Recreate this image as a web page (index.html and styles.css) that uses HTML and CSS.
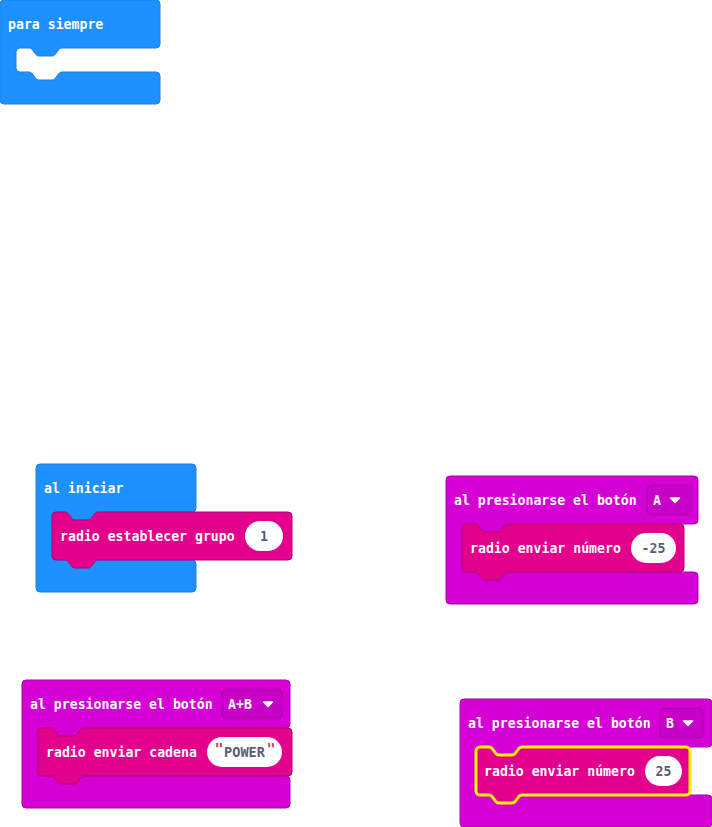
FILE: index.html
```html
<!DOCTYPE html>
<html lang="es">
<head>
    <meta charset="UTF-8">
    <meta name="viewport" content="width=device-width, initial-scale=1.0">
    <title>Bloques - radio</title>
    <link rel="stylesheet" href="styles.css">
</head>
<body>
    <div class="workspace">
        <svg class="canvas" width="712" height="827" viewBox="0 0 712 827">

            <!-- para siempre -->
            <g transform="translate(0,0)">
                <path class="blk loops" d="M0,4 a4,4 0 0 1 4,-4 h152 a4,4 0 0 1 4,4 v40 a4,4 0 0 1 -4,4 h-94 c -1.5,0 -2.5,0.8 -3.2,1.6 l -3.6,4.8 c -0.7,0.8 -1.7,1.6 -3.2,1.6 h -13 c -1.5,0 -2.5,-0.8 -3.2,-1.6 l -3.6,-4.8 c -0.7,-0.8 -1.7,-1.6 -3.2,-1.6 h-9 a4,4 0 0 0 -4,4 v16 a4,4 0 0 0 4,4 h9 c 1.5,0 2.5,0.8 3.2,1.6 l 3.6,4.8 c 0.7,0.8 1.7,1.6 3.2,1.6 h 13 c 1.5,0 2.5,-0.8 3.2,-1.6 l 3.6,-4.8 c 0.7,-0.8 1.7,-1.6 3.2,-1.6 h94 a4,4 0 0 1 4,4 v24 a4,4 0 0 1 -4,4 h-152 a4,4 0 0 1 -4,-4 z"/>
                <text class="lbl" x="8" y="24">para siempre</text>
            </g>

            <!-- al iniciar -->
            <g transform="translate(36,464)">
                <path class="blk loops" d="M0,4 a4,4 0 0 1 4,-4 h152 a4,4 0 0 1 4,4 v40 a4,4 0 0 1 -4,4 h-94 c -1.5,0 -2.5,0.8 -3.2,1.6 l -3.6,4.8 c -0.7,0.8 -1.7,1.6 -3.2,1.6 h -13 c -1.5,0 -2.5,-0.8 -3.2,-1.6 l -3.6,-4.8 c -0.7,-0.8 -1.7,-1.6 -3.2,-1.6 h-9 a4,4 0 0 0 -4,4 v40 a4,4 0 0 0 4,4 h9 c 1.5,0 2.5,0.8 3.2,1.6 l 3.6,4.8 c 0.7,0.8 1.7,1.6 3.2,1.6 h 13 c 1.5,0 2.5,-0.8 3.2,-1.6 l 3.6,-4.8 c 0.7,-0.8 1.7,-1.6 3.2,-1.6 h94 a4,4 0 0 1 4,4 v24 a4,4 0 0 1 -4,4 h-152 a4,4 0 0 1 -4,-4 z"/>
                <text class="lbl" x="8" y="24">al iniciar</text>
                <g transform="translate(16,48)">
                    <path class="blk radio" d="M0,4 a4,4 0 0 1 4,-4 h9 c 1.5,0 2.5,0.8 3.2,1.6 l 3.6,4.8 c 0.7,0.8 1.7,1.6 3.2,1.6 h 13 c 1.5,0 2.5,-0.8 3.2,-1.6 l 3.6,-4.8 c 0.7,-0.8 1.7,-1.6 3.2,-1.6 h190 a4,4 0 0 1 4,4 v40 a4,4 0 0 1 -4,4 h-190 c -1.5,0 -2.5,0.8 -3.2,1.6 l -3.6,4.8 c -0.7,0.8 -1.7,1.6 -3.2,1.6 h -13 c -1.5,0 -2.5,-0.8 -3.2,-1.6 l -3.6,-4.8 c -0.7,-0.8 -1.7,-1.6 -3.2,-1.6 h-9 a4,4 0 0 1 -4,-4 z"/>
                    <text class="lbl" x="8" y="24">radio establecer grupo</text>
                    <rect class="oval" x="193" y="9" width="38" height="30" rx="15"/>
                    <text class="val" x="212" y="24">1</text>
                </g>
            </g>

            <!-- al presionarse el botón A -->
            <g transform="translate(446,476)">
                <path class="blk input" d="M0,4 a4,4 0 0 1 4,-4 h244 a4,4 0 0 1 4,4 v40 a4,4 0 0 1 -4,4 h-186 c -1.5,0 -2.5,0.8 -3.2,1.6 l -3.6,4.8 c -0.7,0.8 -1.7,1.6 -3.2,1.6 h -13 c -1.5,0 -2.5,-0.8 -3.2,-1.6 l -3.6,-4.8 c -0.7,-0.8 -1.7,-1.6 -3.2,-1.6 h-9 a4,4 0 0 0 -4,4 v40 a4,4 0 0 0 4,4 h9 c 1.5,0 2.5,0.8 3.2,1.6 l 3.6,4.8 c 0.7,0.8 1.7,1.6 3.2,1.6 h 13 c 1.5,0 2.5,-0.8 3.2,-1.6 l 3.6,-4.8 c 0.7,-0.8 1.7,-1.6 3.2,-1.6 h186 a4,4 0 0 1 4,4 v24 a4,4 0 0 1 -4,4 h-244 a4,4 0 0 1 -4,-4 z"/>
                <text class="lbl" x="8" y="24">al presionarse el botón</text>
                <rect class="dd" x="201" y="9.5" width="43" height="29" rx="4"/>
                <text class="lbl" x="207" y="24">A</text>
                <path class="caret" d="M224.5,22 h9 l-4.5,4.5 z"/>
                <g transform="translate(16,48)">
                    <path class="blk radio" d="M0,4 a4,4 0 0 1 4,-4 h9 c 1.5,0 2.5,0.8 3.2,1.6 l 3.6,4.8 c 0.7,0.8 1.7,1.6 3.2,1.6 h 13 c 1.5,0 2.5,-0.8 3.2,-1.6 l 3.6,-4.8 c 0.7,-0.8 1.7,-1.6 3.2,-1.6 h172 a4,4 0 0 1 4,4 v40 a4,4 0 0 1 -4,4 h-172 c -1.5,0 -2.5,0.8 -3.2,1.6 l -3.6,4.8 c -0.7,0.8 -1.7,1.6 -3.2,1.6 h -13 c -1.5,0 -2.5,-0.8 -3.2,-1.6 l -3.6,-4.8 c -0.7,-0.8 -1.7,-1.6 -3.2,-1.6 h-9 a4,4 0 0 1 -4,-4 z"/>
                    <text class="lbl" x="8" y="24">radio enviar número</text>
                    <rect class="oval" x="169" y="9" width="45" height="30" rx="15"/>
                    <text class="val" x="191.5" y="24">-25</text>
                </g>
            </g>

            <!-- al presionarse el botón A+B -->
            <g transform="translate(22,680)">
                <path class="blk input" d="M0,4 a4,4 0 0 1 4,-4 h260 a4,4 0 0 1 4,4 v40 a4,4 0 0 1 -4,4 h-202 c -1.5,0 -2.5,0.8 -3.2,1.6 l -3.6,4.8 c -0.7,0.8 -1.7,1.6 -3.2,1.6 h -13 c -1.5,0 -2.5,-0.8 -3.2,-1.6 l -3.6,-4.8 c -0.7,-0.8 -1.7,-1.6 -3.2,-1.6 h-9 a4,4 0 0 0 -4,4 v40 a4,4 0 0 0 4,4 h9 c 1.5,0 2.5,0.8 3.2,1.6 l 3.6,4.8 c 0.7,0.8 1.7,1.6 3.2,1.6 h 13 c 1.5,0 2.5,-0.8 3.2,-1.6 l 3.6,-4.8 c 0.7,-0.8 1.7,-1.6 3.2,-1.6 h202 a4,4 0 0 1 4,4 v24 a4,4 0 0 1 -4,4 h-260 a4,4 0 0 1 -4,-4 z"/>
                <text class="lbl" x="8" y="24">al presionarse el botón</text>
                <rect class="dd" x="200" y="9.5" width="60" height="29" rx="4"/>
                <text class="lbl" x="206" y="24">A+B</text>
                <path class="caret" d="M241.5,22 h9 l-4.5,4.5 z"/>
                <g transform="translate(16,48)">
                    <path class="blk radio" d="M0,4 a4,4 0 0 1 4,-4 h9 c 1.5,0 2.5,0.8 3.2,1.6 l 3.6,4.8 c 0.7,0.8 1.7,1.6 3.2,1.6 h 13 c 1.5,0 2.5,-0.8 3.2,-1.6 l 3.6,-4.8 c 0.7,-0.8 1.7,-1.6 3.2,-1.6 h204 a4,4 0 0 1 4,4 v40 a4,4 0 0 1 -4,4 h-204 c -1.5,0 -2.5,0.8 -3.2,1.6 l -3.6,4.8 c -0.7,0.8 -1.7,1.6 -3.2,1.6 h -13 c -1.5,0 -2.5,-0.8 -3.2,-1.6 l -3.6,-4.8 c -0.7,-0.8 -1.7,-1.6 -3.2,-1.6 h-9 a4,4 0 0 1 -4,-4 z"/>
                    <text class="lbl" x="8" y="24">radio enviar cadena</text>
                    <rect class="oval" x="169" y="9" width="75" height="30" rx="15"/>
                    <text class="quote" x="181" y="26.5">"</text>
                    <text class="val big" x="206.5" y="24">POWER</text>
                    <text class="quote" x="233" y="26.5">"</text>
                </g>
            </g>

            <!-- al presionarse el botón B (seleccionado) -->
            <g transform="translate(460,699)">
                <path class="blk input" d="M0,4 a4,4 0 0 1 4,-4 h244 a4,4 0 0 1 4,4 v40 a4,4 0 0 1 -4,4 h-186 c -1.5,0 -2.5,0.8 -3.2,1.6 l -3.6,4.8 c -0.7,0.8 -1.7,1.6 -3.2,1.6 h -13 c -1.5,0 -2.5,-0.8 -3.2,-1.6 l -3.6,-4.8 c -0.7,-0.8 -1.7,-1.6 -3.2,-1.6 h-9 a4,4 0 0 0 -4,4 v40 a4,4 0 0 0 4,4 h9 c 1.5,0 2.5,0.8 3.2,1.6 l 3.6,4.8 c 0.7,0.8 1.7,1.6 3.2,1.6 h 13 c 1.5,0 2.5,-0.8 3.2,-1.6 l 3.6,-4.8 c 0.7,-0.8 1.7,-1.6 3.2,-1.6 h186 a4,4 0 0 1 4,4 v24 a4,4 0 0 1 -4,4 h-244 a4,4 0 0 1 -4,-4 z"/>
                <text class="lbl" x="8" y="24">al presionarse el botón</text>
                <rect class="dd" x="200" y="9.5" width="43" height="29" rx="4"/>
                <text class="lbl" x="206" y="24">B</text>
                <path class="caret" d="M223.5,22 h9 l-4.5,4.5 z"/>
                <g transform="translate(16,48)">
                    <path class="blk radio" d="M0,4 a4,4 0 0 1 4,-4 h9 c 1.5,0 2.5,0.8 3.2,1.6 l 3.6,4.8 c 0.7,0.8 1.7,1.6 3.2,1.6 h 13 c 1.5,0 2.5,-0.8 3.2,-1.6 l 3.6,-4.8 c 0.7,-0.8 1.7,-1.6 3.2,-1.6 h164 a4,4 0 0 1 4,4 v40 a4,4 0 0 1 -4,4 h-164 c -1.5,0 -2.5,0.8 -3.2,1.6 l -3.6,4.8 c -0.7,0.8 -1.7,1.6 -3.2,1.6 h -13 c -1.5,0 -2.5,-0.8 -3.2,-1.6 l -3.6,-4.8 c -0.7,-0.8 -1.7,-1.6 -3.2,-1.6 h-9 a4,4 0 0 1 -4,-4 z"/>
                    <path class="glow" d="M0,4 a4,4 0 0 1 4,-4 h9 c 1.5,0 2.5,0.8 3.2,1.6 l 3.6,4.8 c 0.7,0.8 1.7,1.6 3.2,1.6 h 13 c 1.5,0 2.5,-0.8 3.2,-1.6 l 3.6,-4.8 c 0.7,-0.8 1.7,-1.6 3.2,-1.6 h164 a4,4 0 0 1 4,4 v40 a4,4 0 0 1 -4,4 h-164 c -1.5,0 -2.5,0.8 -3.2,1.6 l -3.6,4.8 c -0.7,0.8 -1.7,1.6 -3.2,1.6 h -13 c -1.5,0 -2.5,-0.8 -3.2,-1.6 l -3.6,-4.8 c -0.7,-0.8 -1.7,-1.6 -3.2,-1.6 h-9 a4,4 0 0 1 -4,-4 z"/>
                    <text class="lbl" x="8" y="24">radio enviar número</text>
                    <rect class="oval" x="169" y="9" width="37" height="30" rx="15"/>
                    <text class="val" x="187.5" y="24">25</text>
                </g>
            </g>

        </svg>
    </div>
</body>
</html>
```

FILE: styles.css
```css
body {
    margin: 0;
    padding: 0;
    background: #ffffff;
    font-family: "DejaVu Sans Mono", "Liberation Mono", monospace;
}
.workspace {
    width: 712px;
    height: 827px;
    overflow: hidden;
    background: #ffffff;
}
.canvas {
    display: block;
}
.blk {
    stroke-width: 1;
}
.loops {
    fill: #1e90ff;
    stroke: #1b80e3;
}
.radio {
    fill: #e3008c;
    stroke: #b6006f;
}
.input {
    fill: #d400d4;
    stroke: #b000b0;
}
.glow {
    fill: none;
    stroke: #fff200;
    stroke-width: 3;
}
.lbl {
    fill: #ffffff;
    font-family: "DejaVu Sans Mono", "Liberation Mono", monospace;
    font-size: 13.2px;
    font-weight: bold;
    dominant-baseline: central;
}
.dd {
    fill: #c800c8;
    stroke: #a600a6;
    stroke-width: 1;
}
.caret {
    fill: #ffffff;
    stroke: #ffffff;
    stroke-width: 1.5;
    stroke-linejoin: round;
}
.oval {
    fill: #ffffff;
}
.val {
    fill: #575e75;
    font-family: "DejaVu Sans Mono", "Liberation Mono", monospace;
    font-size: 13.2px;
    font-weight: bold;
    text-anchor: middle;
    dominant-baseline: central;
}
.val.big {
    font-size: 13.6px;
}
.quote {
    fill: #d23a62;
    font-family: "DejaVu Sans Mono", "Liberation Mono", monospace;
    font-size: 15px;
    font-weight: bold;
    text-anchor: middle;
}
```
